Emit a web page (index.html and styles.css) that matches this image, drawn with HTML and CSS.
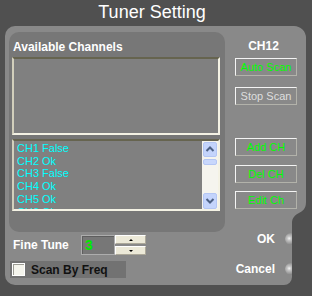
FILE: index.html
```html
<!DOCTYPE html>
<html lang="en">
  <head>
    <meta charset="UTF-8" />
    <title>Tuner Setting</title>
    <link rel="stylesheet" href="styles.css">
  </head>
  <body>
    <h1 class="title">Tuner Setting</h1>
    <main class="panel">
      <div class="top">
        <section class="channels">
          <h2>Available Channels</h2>
          <div class="well"></div>
          <div class="listbox">
            <ul class="items">
              <li>CH1 False</li>
              <li>CH2 Ok</li>
              <li>CH3 False</li>
              <li>CH4 Ok</li>
              <li>CH5 Ok</li>
              <li>CH6 Ok</li>
            </ul>
            <div class="scrollbar">
              <span class="sb-btn">
                <svg width="14" height="15" viewBox="0 0 14 15"><polyline points="3.5,9 7,5.5 10.5,9" fill="none" stroke="#4d6185" stroke-width="2"/></svg>
              </span>
              <span class="thumb"></span>
              <span class="sb-btn down">
                <svg width="14" height="15" viewBox="0 0 14 15"><polyline points="3.5,6 7,9.5 10.5,6" fill="none" stroke="#4d6185" stroke-width="2"/></svg>
              </span>
            </div>
          </div>
        </section>
        <aside class="actions">
          <h3>CH12</h3>
          <button class="btn auto">Auto Scan</button>
          <button class="btn stop">Stop Scan</button>
          <button class="btn add">Add CH</button>
          <button class="btn del">Del CH</button>
          <button class="btn edit">Edit Ch</button>
        </aside>
      </div>
      <div class="bottom">
        <div class="tune">
          <div class="fine">
            <span class="fine-label">Fine Tune</span>
            <span class="value">3</span>
            <div class="spin">
              <span class="spin-btn"><i class="tri up"></i></span>
              <span class="spin-btn"><i class="tri down"></i></span>
            </div>
          </div>
          <label class="check"><span class="box"></span>Scan By Freq</label>
        </div>
        <div class="confirm">
          <div class="knob-row">OK<span class="knob"></span></div>
          <div class="knob-row cancel">Cancel<span class="knob"></span></div>
        </div>
      </div>
    </main>
  </body>
</html>
```

FILE: styles.css
```css
body {
  margin: 0;
  width: 312px;
  height: 296px;
  overflow: hidden;
  background: #505050;
  font-family: "Liberation Sans", Arial, sans-serif;
}
.title {
  margin: 0;
  height: 26px;
  padding: 1px 8px 0 0;
  box-sizing: border-box;
  font-size: 18px;
  font-weight: normal;
  line-height: 22px;
  text-align: center;
  color: #fff;
}
.panel {
  margin-left: 5px;
  width: 301px;
  height: 259px;
  box-sizing: border-box;
  padding: 6px 0 0 4px;
  background: #898989;
  display: flex;
  flex-direction: column;
  clip-path: path("M10,0 H289 A12,12 0 0 1 301,12 V176 C301,190 287,184 287,198 V251 A8,8 0 0 1 279,259 H10 A10,10 0 0 1 0,249 V10 A10,10 0 0 1 10,0 Z");
}
.top {
  display: flex;
  height: 200px;
}
.channels {
  width: 216px;
  box-sizing: border-box;
  padding: 8px 5px 0 3px;
  background: #777;
  border-radius: 10px;
}
.channels h2 {
  margin: 0 0 3px 1px;
  font-size: 12px;
  line-height: 14px;
  color: #fff;
}
.well,
.listbox {
  box-sizing: border-box;
  border: 2px solid;
  border-color: #66644f #f4f2e4 #f4f2e4 #d2cfbc;
  background: #808080;
}
.well {
  height: 78px;
}
.listbox {
  margin-top: 4px;
  height: 72px;
  display: flex;
}
.items {
  flex: 1;
  margin: 0;
  padding: 1px 0 0 3px;
  list-style: none;
  overflow: hidden;
  font-size: 11px;
  line-height: 12.7px;
  color: #00ffff;
}
.scrollbar {
  width: 16px;
  background: #f5f4ee;
  display: flex;
  flex-direction: column;
  align-items: center;
  padding-top: 1px;
}
.sb-btn {
  width: 14px;
  height: 15px;
  box-sizing: border-box;
  border: 1px solid #b4c6f4;
  border-radius: 2px;
  background: #c4d4fc;
  display: flex;
}
.sb-btn svg {
  margin: -1px;
}
.thumb {
  width: 14px;
  height: 6px;
  margin-top: 2px;
  box-sizing: border-box;
  border: 1px solid #b4c6f4;
  border-radius: 2px;
  background: #c8d7fc;
}
.sb-btn.down {
  margin-top: auto;
  height: 16px;
}
.actions {
  flex: 1;
  padding: 7px 0 0 10px;
}
.actions h3 {
  margin: 0;
  width: 62px;
  padding-right: 5px;
  box-sizing: border-box;
  font-size: 12px;
  line-height: 14px;
  text-align: center;
  color: #fff;
}
.btn {
  display: block;
  width: 62px;
  height: 18px;
  padding: 0;
  box-sizing: border-box;
  border: 1px solid;
  border-color: #f4f4f4 #b2b2aa #b2b2aa #f4f4f4;
  background: #898989;
  font-family: "Liberation Sans", Arial, sans-serif;
  font-size: 11px;
  color: #00ff00;
}
.auto { margin-top: 5px; }
.stop { margin-top: 11px; color: #dedede; }
.add { margin-top: 33px; }
.del { margin-top: 9px; }
.edit { margin-top: 8px; }
.bottom {
  flex: 1;
  display: flex;
  justify-content: space-between;
}
.tune {
  padding-left: 1px;
}
.fine {
  margin-top: 3px;
  display: flex;
  align-items: center;
  height: 20px;
}
.fine-label,
.check,
.knob-row {
  font-size: 12px;
  font-weight: bold;
  color: #fff;
}
.fine-label {
  width: 71px;
  box-sizing: border-box;
  padding-left: 3px;
}
.value {
  width: 34px;
  height: 20px;
  box-sizing: border-box;
  padding-left: 3px;
  border: 1px solid #adadad;
  box-shadow: inset 1px 1px 0 #5e5e5e;
  background: #777;
  font-size: 14px;
  font-weight: bold;
  line-height: 18px;
  color: #00e800;
}
.spin {
  width: 31px;
  height: 20px;
  display: flex;
  flex-direction: column;
  justify-content: space-between;
}
.spin-btn {
  height: 9px;
  box-sizing: border-box;
  border: 1px solid;
  border-color: #fff #aca899 #aca899 #fff;
  background: #ece9d8;
  display: flex;
  align-items: center;
  justify-content: center;
}
.tri {
  width: 0;
  height: 0;
  border-left: 2px solid transparent;
  border-right: 2px solid transparent;
}
.tri.up { border-bottom: 2px solid #000; }
.tri.down { border-top: 2px solid #000; }
.check {
  margin-top: 6px;
  width: 116px;
  height: 17px;
  display: flex;
  align-items: center;
  gap: 6px;
  background: #727272;
  color: #111;
}
.box {
  width: 13px;
  height: 13px;
  margin-left: 2px;
  box-sizing: border-box;
  border: 1px solid #fff;
  box-shadow: inset 1px 1px 0 #9c9c94;
  background: #f4f4ec;
}
.confirm {
  margin-right: 9px;
}
.knob-row {
  height: 14px;
  line-height: 14px;
  display: flex;
  align-items: center;
  justify-content: flex-end;
}
.cancel {
  margin-top: 16px;
}
.knob {
  width: 12px;
  height: 12px;
  margin-left: 10px;
  border-radius: 50%;
  background: radial-gradient(circle at 35% 45%, #f4f4f4 0, #c4c4c4 20%, #8a8a8a 60%, #5c5c5c 100%);
}
```
